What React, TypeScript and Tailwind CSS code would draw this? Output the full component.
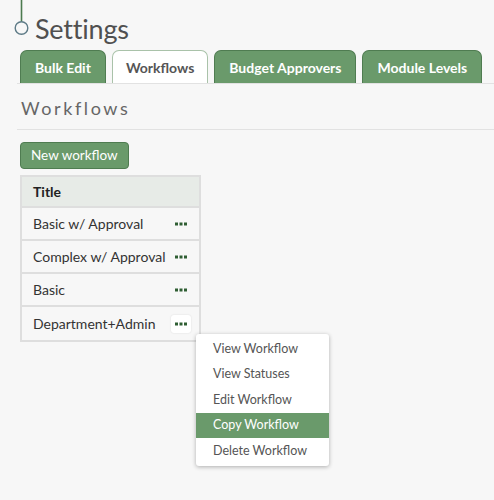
import { useState } from "react";

const TABS = ["Bulk Edit", "Workflows", "Budget Approvers", "Module Levels"];
const ROWS = ["Basic w/ Approval", "Complex w/ Approval", "Basic", "Department+Admin"];
const MENU = ["View Workflow", "View Statuses", "Edit Workflow", "Copy Workflow", "Delete Workflow"];

function Dots() {
  return (
    <svg width="12" height="4" viewBox="0 0 12 4" className="text-[#2f5e33]">
      <rect x="0" y="0.5" width="3" height="3" fill="currentColor" />
      <rect x="4.5" y="0.5" width="3" height="3" fill="currentColor" />
      <rect x="9" y="0.5" width="3" height="3" fill="currentColor" />
    </svg>
  );
}

export default function App() {
  const [active] = useState(1);
  const [hovered] = useState(3);

  return (
    <div className="min-h-[500px] w-[494px] bg-[#f7f7f7] font-['Lato',sans-serif] text-[#444] overflow-hidden">
      <div className="flex items-end pl-[14px] h-[42px]">
        <svg width="15" height="42" viewBox="0 0 15 42" className="shrink-0 self-start">
          <line x1="7.5" y1="0" x2="7.5" y2="21.5" stroke="#4c7a4f" strokeWidth="1.6" />
          <circle cx="7.5" cy="28" r="6.3" fill="none" stroke="#5d7a86" strokeWidth="1.4" />
        </svg>
        <h1 className="ml-[6px] text-[27px] leading-none text-[#505050] tracking-[-0.2px]">Settings</h1>
      </div>

      <div className="mt-[8px] ml-[17px] flex items-end gap-[6px] pl-[3px] border-b border-[#e2e2e2] h-[34px]">
        {TABS.map((t, i) => (
          <div
            key={t}
            className={`h-[33px] flex items-center rounded-t-[7px] border border-b-0 text-[14px] font-bold ${
              i === active
                ? "bg-white border-[#a9c2a9] text-[#555] px-[13px]"
                : "bg-[#6a9a6b] border-[#4f7c51] text-white px-[14px]"
            }`}
          >
            {t}
          </div>
        ))}
      </div>

      <div className="ml-[17px] border-b border-[#e2e2e2] pt-[13px] pb-[10px] pl-[4px]">
        <h2 className="text-[18px] leading-[22px] tracking-[2.6px] text-[#666]">Workflows</h2>
      </div>

      <div className="pl-[20px] pt-[12px]">
        <button className="h-[27px] px-[10px] rounded-[4px] bg-[#6a9a6b] border border-[#4f7c51] text-white text-[13.5px] leading-none">
          New workflow
        </button>

        <div className="relative mt-[6px] w-[181px] border-2 border-[#dedede]">
          <div className="h-[31px] flex items-center pl-[11px] bg-[#e7ebe7] border-b-2 border-[#dedede] text-[14px] font-bold text-[#222]">
            Title
          </div>
          {ROWS.map((r, i) => (
            <div
              key={r}
              className={`h-[33px] flex items-center justify-between pl-[11px] pr-[8px] bg-[#f7f7f7] text-[14px] text-[#333] ${
                i < ROWS.length - 1 ? "border-b-2 border-[#dedede]" : ""
              }`}
            >
              <span className="whitespace-nowrap">{r}</span>
              <span
                className={`flex items-center justify-center w-[20px] h-[18px] rounded-[3px] ${
                  i === hovered ? "bg-white shadow-[0_0_2px_rgba(0,0,0,0.12)]" : ""
                }`}
              >
                <Dots />
              </span>
            </div>
          ))}

          <div className="absolute left-[174px] top-[157px] w-[133px] py-[2px] bg-white rounded-[3px] shadow-[0_1px_4px_rgba(0,0,0,0.3)] z-10">
            {MENU.map((m) => (
              <div
                key={m}
                className={`h-[25.5px] flex items-center pl-[17px] text-[12.5px] whitespace-nowrap ${
                  m === "Copy Workflow" ? "bg-[#6a9a6b] text-white" : "text-[#555]"
                }`}
              >
                {m}
              </div>
            ))}
          </div>
        </div>
      </div>
    </div>
  );
}
